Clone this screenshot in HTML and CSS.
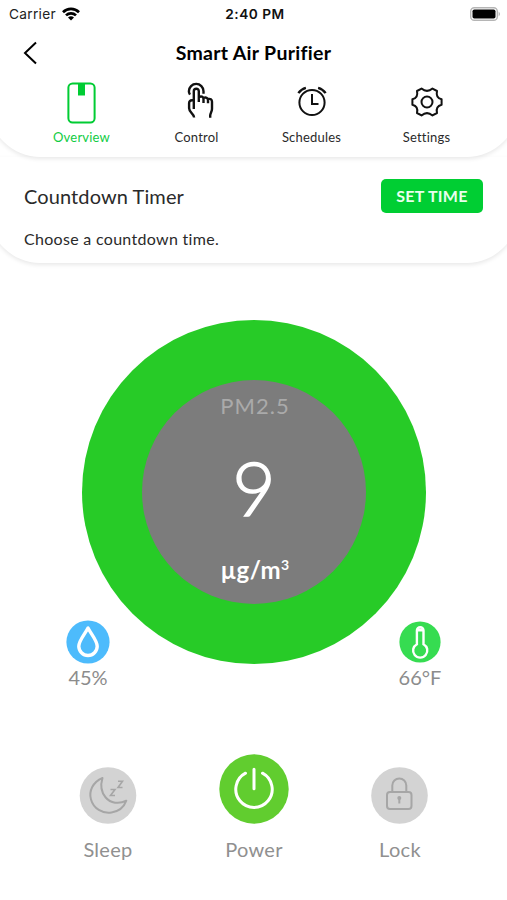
FILE: index.html
```html
<!DOCTYPE html>
<html lang="en">
<head>
    <meta charset="UTF-8">
    <title>Smart Air Purifier</title>
    <link rel="stylesheet" href="styles.css">
</head>
<body>
    <header class="header">
        <div class="statusBar">
            <div class="carrier">
                <span>Carrier</span>
                <svg width="18" height="14" viewBox="0 0 18 14" fill="none" stroke="#000" stroke-width="2.7">
                    <path d="M1 5.2a11.5 11.5 0 0 1 16 0"/>
                    <path d="M4 8.4a7.2 7.2 0 0 1 10 0"/>
                    <path d="M9 13.6 6 10.6a4.3 4.3 0 0 1 6 0z" fill="#000" stroke="none"/>
                </svg>
            </div>
            <div class="clock">2:40 PM</div>
            <svg class="battery" width="31" height="14" viewBox="0 0 31 14">
                <rect x="0.7" y="0.7" width="26.6" height="12.6" rx="3.6" fill="#fff" stroke="#b5b5b5" stroke-width="1.4"/>
                <rect x="2.5" y="2.4" width="23" height="9.2" rx="1.8"/>
                <path d="M28.6 4.6q2.8 2.4 0 4.8z" fill="#b5b5b5"/>
            </svg>
        </div>
        <div class="titleBar">
            <svg class="back" width="16" height="24" viewBox="0 0 16 24" fill="none" stroke="#000" stroke-width="2">
                <path d="M13 1.5 2 12l11 10.5"/>
            </svg>
            <h1>Smart Air Purifier</h1>
        </div>
        <nav class="tabs">
            <a class="tab active">
                <svg width="30" height="42" viewBox="0 0 30 42">
                    <rect x="1.4" y="1.4" width="26.2" height="39" rx="4.2" fill="none" stroke="#0c3" stroke-width="2"/>
                    <path d="M11 1h7v12.5h-7z" fill="#0c3"/>
                </svg>
                <span>Overview</span>
            </a>
            <a class="tab">
                <svg class="hand" width="28" height="42" viewBox="0 0 28 42" fill="none" stroke="#111" stroke-width="2.4" stroke-linejoin="round">
                    <path d="M3 12.600C1.900 11 1.900 9.600 1.900 9.200a7.300 7.300 0 0 1 14.600 0v2.500"/>
                    <path d="M6.800 27V9.200a2.500 2.500 0 0 1 5 0V20M11.800 15.100c2.400-1.200 4.700-.4 4.700 1.800v4M16.500 16c2.400-1 4.500-.2 4.500 1.900v3.400M21 17.100c2.300-.7 4 .4 4 2.700v7.200c0 2.800-1.800 4-1.800 6.500v2.300M6.800 18.300H5c-1.900 0-2.900 1-2.900 3v5c0 4.500 5 5 5 9.300"/>
                </svg>
                <span>Control</span>
            </a>
            <a class="tab">
                <svg width="30" height="42" viewBox="0 0 30 42" fill="none" stroke="#111" stroke-width="2">
                    <circle cx="15" cy="20.500" r="12.600"/>
                    <path d="M15 12v10h6.500"/>
                    <path d="M1.400 11.200q2.700-4.200 7.500-5.400M28.600 11.200q-2.700-4.200-7.500-5.400" stroke-width="2.400"/>
                </svg>
                <span>Schedules</span>
            </a>
            <a class="tab">
                <svg width="34" height="42" viewBox="0 0 34 42" fill="none" stroke="#111" stroke-width="2" stroke-linejoin="round">
                    <circle cx="17" cy="20" r="5.500"/>
                    <path d="M11.500 6.600Q17 11.200 22.500 6.600L27 9Q25.500 15.800 31.600 17.200V22.800Q25.500 24.200 27 31L22.500 33.400Q17 28.800 11.500 33.400L7 31Q8.500 24.200 2.400 22.800V17.200Q8.500 15.800 7 9Z"/>
                </svg>
                <span>Settings</span>
            </a>
        </nav>
    </header>

    <section class="timer">
        <div class="timerRow">
            <h2>Countdown Timer</h2>
            <button class="setTime">SET TIME</button>
        </div>
        <p>Choose a countdown time.</p>
    </section>

    <main class="air">
        <div class="ring">
            <div class="gauge">
                <div class="pmLabel">PM2.5</div>
                <div class="pmValue">9</div>
                <div class="pmUnit">µg/m<sup>3</sup></div>
            </div>
        </div>
        <div class="sensors">
            <div class="sensor">
                <svg width="44" height="44" viewBox="0 0 44 44">
                    <circle cx="22" cy="22" r="21.600" fill="#4dbbfc"/>
                    <path d="M22 8C19 14 12.800 20.500 12.800 26.300a9.200 9.200 0 0 0 18.400 0C31.200 20.500 25 14 22 8z" fill="none" stroke="#fff" stroke-width="3.400" stroke-linejoin="round"/>
                </svg>
                <span>45%</span>
            </div>
            <div class="sensor">
                <svg width="44" height="44" viewBox="0 0 44 44">
                    <circle cx="22" cy="22" r="20.600" fill="#36dc51"/>
                    <path d="M18.900 24.200V10.500a3.300 3.300 0 0 1 6.600 0v13.700a7.100 7.100 0 1 1-6.600 0z" fill="none" stroke="#fff" stroke-width="2.400"/>
                    <path d="M18.900 8.500h6.600v3h-6.600z" fill="#fff"/>
                </svg>
                <span>66°F</span>
            </div>
        </div>
    </main>

    <footer class="controls">
        <div class="control">
            <svg width="58" height="58" viewBox="0 0 58 58" fill="none" stroke="#a6a6a6" stroke-width="2">
                <circle cx="29" cy="29.500" r="28.300" fill="#d3d3d3" stroke="none"/>
                <path d="M23.500 12C14 16 9.500 25 12 33.500 14.500 42.500 23.500 48 32.500 46.500 39.500 45.500 45 41 47.300 34.700 40 38.500 31.500 37.200 26.700 31.500 22 26 21.500 18.500 23.500 12z" stroke-linejoin="round"/>
                <path d="M31.500 23.500h4.500l-4.500 6h4.500M39 15.200h4.500l-4.500 6.300h4.500" stroke-width="1.600"/>
            </svg>
            <span>Sleep</span>
        </div>
        <div class="control power">
            <svg width="70" height="70" viewBox="0 0 70 70" fill="none" stroke="#fff" stroke-width="3" stroke-linecap="round">
                <circle cx="35" cy="35" r="34.700" fill="#61cd2f" stroke="none"/>
                <path d="M26.500 19.200a18.200 18.200 0 1 0 17 0M35 15.300v19.500"/>
            </svg>
            <span>Power</span>
        </div>
        <div class="control">
            <svg width="58" height="58" viewBox="0 0 58 58" fill="none" stroke="#a6a6a6" stroke-width="2">
                <circle cx="28.500" cy="29.500" r="28.300" fill="#d3d3d3" stroke="none"/>
                <rect x="16" y="26" width="24.500" height="17" rx="3"/>
                <path d="M21.300 26v-6.500a7 7 0 0 1 14 0V26"/>
                <circle cx="28.300" cy="32" r="2" fill="#a6a6a6" stroke="none"/>
                <path d="M28.300 32v5.500"/>
            </svg>
            <span>Lock</span>
        </div>
    </footer>
</body>
</html>
```
FILE: styles.css
```css
*{
    box-sizing: border-box;
}
body{
    margin: 0;
    height: 900px;
    width: 507px;
    overflow: hidden;
    background: #fff;
    color: #2a2a2a;
    font-family: Lato, "Open Sans", sans-serif;
}
h1,h2,p{
    margin: 0;
}
svg{
    display: block;
    flex: none;
}
span{
    white-space: nowrap;
}
.header{
    position: relative;
    z-index: 1;
    height: 157px;
    margin: 0 -11px;
    padding: 0 11px;
    background: #fff;
    border-radius: 0 0 51px 51px;
    box-shadow: 0 2px 4px rgba(0,0,0,0.09);
}
.statusBar{
    display: grid;
    grid-template-columns: 1fr auto 1fr;
    align-items: center;
    height: 27px;
    padding: 0 6px 0 9px;
    font-family: Inter, sans-serif;
    font-size: 13.7px;
    color: #222;
}
.carrier{
    display: flex;
    align-items: center;
    gap: 6px;
    letter-spacing: 0.3px;
}
.clock{
    font-weight: 600;
    letter-spacing: 0.5px;
    color: #111;
}
.battery{
    justify-self: end;
}
.titleBar{
    display: grid;
    grid-template-columns: 30px 1fr 30px;
    align-items: center;
    height: 52px;
    padding: 0 23px;
}
h1{
    text-align: center;
    font-size: 19.5px;
    line-height: 24px;
    letter-spacing: 0.3px;
    color: #000;
}
.tabs{
    display: grid;
    grid-template-columns: repeat(4, 115px);
    padding-left: 24px;
    padding-top: 3px;
}
.tab{
    display: flex;
    flex-direction: column;
    align-items: center;
    font-size: 13px;
    line-height: 18px;
    gap: 4px;
    letter-spacing: 0.2px;
}
.hand{
    margin-left: 9px;
}
.active{
    color: #1c4;
}
.timer{
    height: 106px;
    margin: 0 -11px;
    padding: 22px 35px 0;
    background: #fff;
    border-radius: 0 0 51px 51px;
    box-shadow: 0 2px 4px rgba(0,0,0,0.09);
}
.timerRow{
    display: flex;
    justify-content: space-between;
    align-items: center;
}
h2{
    font-size: 20px;
    font-weight: 400;
    letter-spacing: 0.1px;
}
.setTime{
    width: 102px;
    height: 34px;
    padding: 0 0 1px;
    border: none;
    border-radius: 5px;
    background: #00ce33;
    color: #e8ffed;
    font: bold 16px Lato, sans-serif;
    letter-spacing: 0.3px;
}
.timer p{
    margin-top: 16px;
    font-size: 16px;
    line-height: 20px;
    letter-spacing: 0.3px;
}
.air{
    padding-top: 57px;
}
.ring{
    display: grid;
    place-items: center;
    width: 344px;
    height: 344px;
    margin-left: 82px;
    border-radius: 50%;
    background: #27cb27;
}
.gauge{
    width: 224px;
    height: 224px;
    padding-top: 12px;
    border-radius: 50%;
    background: #7c7c7c;
    text-align: center;
    color: #fff;
}
.pmLabel{
    padding-left: 2px;
    font-size: 22px;
    line-height: 28px;
    letter-spacing: 1px;
    color: #aaa;
}
.pmValue{
    font-size: 75px;
    line-height: 90px;
    margin-top: 22px;
    font-weight: 300;
    -webkit-text-stroke: 1.5px #fff;
}
.pmUnit{
    padding-left: 2px;
    font-size: 24px;
    line-height: 28px;
    margin-top: 24px;
    font-weight: 700;
    letter-spacing: 0.4px;
}
.pmUnit sup{
    font-size: 14px;
    font-feature-settings: "lnum";
    line-height: 0;
    vertical-align: 9px;
}
.sensors{
    display: flex;
    justify-content: space-between;
    width: 392px;
    margin: -44px 0 0 58px;
}
.sensor{
    display: flex;
    flex-direction: column;
    align-items: center;
    width: 60px;
    font-size: 20px;
    line-height: 26px;
    color: #8c8c8c;
}
.controls{
    display: grid;
    grid-template-columns: repeat(3, 146px);
    align-items: end;
    margin: 64px 0 0 35px;
}
.control{
    display: flex;
    flex-direction: column;
    align-items: center;
    gap: 12px;
    font-size: 20px;
    line-height: 26px;
    letter-spacing: 0.3px;
    color: #909090;
}
```
